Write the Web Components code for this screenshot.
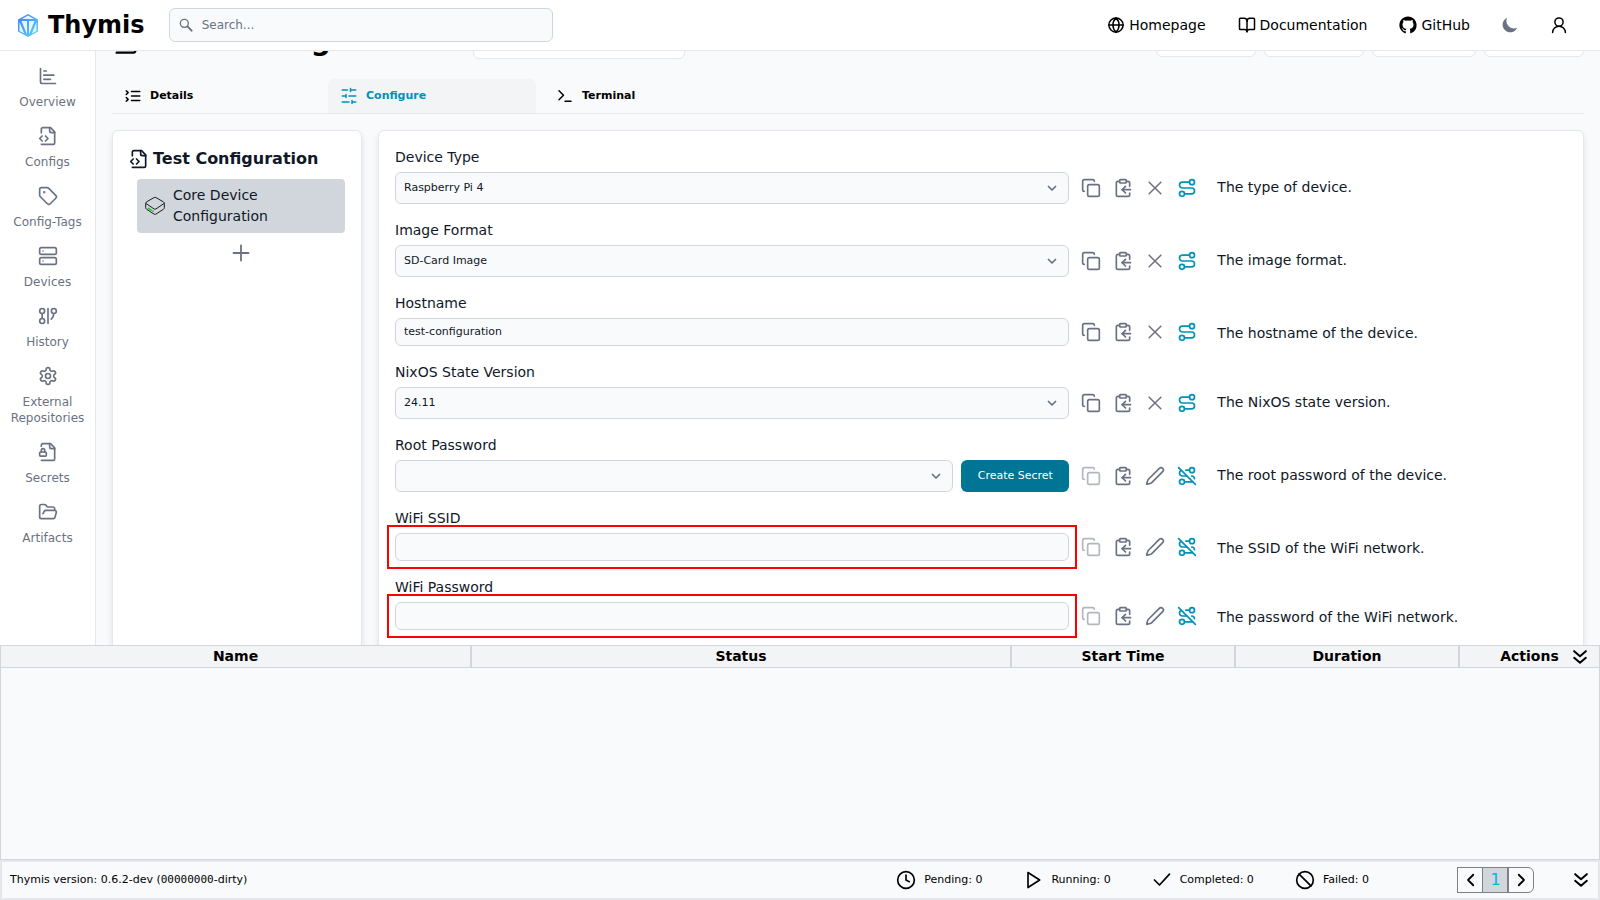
<!DOCTYPE html>
<html lang="en">
<head>
<meta charset="utf-8">
<meta name="viewport" content="width=device-width, initial-scale=1">
<title>Thymis</title>
<style>
  :root {
    --gray-50: #f9fafb;
    --gray-100: #f3f4f6;
    --gray-200: #e5e7eb;
    --gray-300: #d1d5dc;
    --gray-500: #6a7282;
    --gray-900: #101828;
    --primary: #0092b8;
    --primary-dark: #007595;
  }
  body {
    margin: 0;
    font: 14px/21px "DejaVu Sans", sans-serif;
    color: #000;
    background: var(--gray-50);
  }
</style>
</head>
<body>
<thymis-app></thymis-app>

<script>
const ICONS = {
  chart: '<path d="M3 3v16a2 2 0 0 0 2 2h16"/><path d="M7 16h8"/><path d="M7 11h12"/><path d="M7 6h3"/>',
  file: '<path d="M4 22h14a2 2 0 0 0 2-2V7l-5-5H6a2 2 0 0 0-2 2v4"/><path d="M14 2v4a2 2 0 0 0 2 2h4"/><path d="m5 12-3 3 3 3"/><path d="m9 18 3-3-3-3"/>',
  tag: '<path d="M12.586 2.586A2 2 0 0 0 11.172 2H4a2 2 0 0 0-2 2v7.172a2 2 0 0 0 .586 1.414l8.704 8.704a2.426 2.426 0 0 0 3.42 0l6.58-6.58a2.426 2.426 0 0 0 0-3.42z"/><circle cx="7.5" cy="7.5" r=".5" fill="currentColor"/>',
  server: '<rect width="20" height="8" x="2" y="2" rx="2"/><rect width="20" height="8" x="2" y="14" rx="2"/><path d="M6 6h.01M6 18h.01"/>',
  graph: '<circle cx="5" cy="6" r="3"/><path d="M5 9v6"/><circle cx="5" cy="18" r="3"/><path d="M12 3v18"/><circle cx="19" cy="6" r="3"/><path d="M16 15.7A9 9 0 0 0 19 9"/>',
  gear: '<path d="M12.22 2h-.44a2 2 0 0 0-2 2v.18a2 2 0 0 1-1 1.73l-.43.25a2 2 0 0 1-2 0l-.15-.08a2 2 0 0 0-2.73.73l-.22.38a2 2 0 0 0 .73 2.73l.15.1a2 2 0 0 1 1 1.72v.51a2 2 0 0 1-1 1.74l-.15.09a2 2 0 0 0-.73 2.73l.22.38a2 2 0 0 0 2.73.73l.15-.08a2 2 0 0 1 2 0l.43.25a2 2 0 0 1 1 1.73V20a2 2 0 0 0 2 2h.44a2 2 0 0 0 2-2v-.18a2 2 0 0 1 1-1.73l.43-.25a2 2 0 0 1 2 0l.15.08a2 2 0 0 0 2.73-.73l.22-.39a2 2 0 0 0-.73-2.73l-.15-.08a2 2 0 0 1-1-1.74v-.5a2 2 0 0 1 1-1.74l.15-.09a2 2 0 0 0 .73-2.73l-.22-.38a2 2 0 0 0-2.73-.73l-.15.08a2 2 0 0 1-2 0l-.43-.25a2 2 0 0 1-1-1.73V4a2 2 0 0 0-2-2z"/><circle cx="12" cy="12" r="3"/>',
  lock: '<path d="M4 5V4a2 2 0 0 1 2-2h9l5 5v13a2 2 0 0 1-2 2H4"/><path d="M14 2v4a2 2 0 0 0 2 2h4"/><rect width="8" height="5" x="2" y="12" rx="1"/><path d="M8 12v-2a2 2 0 1 0-4 0v2"/>',
  folder: '<path d="m6 14 1.5-2.9A2 2 0 0 1 9.24 10H20a2 2 0 0 1 1.94 2.5l-1.54 6a2 2 0 0 1-1.95 1.5H4a2 2 0 0 1-2-2V5a2 2 0 0 1 2-2h3.9a2 2 0 0 1 1.69.9l.81 1.2a2 2 0 0 0 1.67.9H18a2 2 0 0 1 2 2v2"/>',
  copy: '<rect width="14" height="14" x="8" y="8" rx="2"/><path d="M4 16c-1.1 0-2-.9-2-2V4c0-1.1.9-2 2-2h10c1.1 0 2 .9 2 2"/>',
  paste: '<rect width="8" height="4" x="8" y="2" rx="1"/><path d="M8 4H6a2 2 0 0 0-2 2v14a2 2 0 0 0 2 2h12a2 2 0 0 0 2-2v-2"/><path d="M16 4h2a2 2 0 0 1 2 2v4"/><path d="M21 14H11"/><path d="m15 10-4 4 4 4"/>',
  close: '<path stroke-width="1.8" d="M5 5l14 14M19 5 5 19"/>',
  pen: '<path d="M21.174 6.812a1 1 0 0 0-3.986-3.987L3.842 16.174a2 2 0 0 0-.5.83l-1.321 4.352a.5.5 0 0 0 .623.622l4.353-1.32a2 2 0 0 0 .83-.497z"/>',
  route: '<circle cx="6" cy="19" r="3"/><path d="M9 19h8.5a3.5 3.5 0 0 0 0-7h-11a3.5 3.5 0 0 1 0-7H15"/><circle cx="18" cy="5" r="3"/>',
  routeoff: '<circle cx="6" cy="19" r="3"/><path d="M9 19h8.5c.4 0 .9-.1 1.3-.2"/><path d="M5.2 5.2A3.5 3.53 0 0 0 6.5 12H12"/><path d="m2 2 20 20"/><path d="M21 15.3a3.5 3.5 0 0 0-3.3-3.3"/><path d="M15 5h-4.3"/><circle cx="18" cy="5" r="3"/>',
  list: '<path d="m3 10 2.500-2.500L3 5"/><path d="m3 19 2.500-2.500L3 14"/><path d="M10 6h11"/><path d="M10 12h11"/><path d="M10 18h11"/>',
  sliders: '<path d="M21 4h-7M10 4H3M21 12h-9M8 12H3M21 20h-5M12 20H3M14 2v4M8 10v4M16 18v4"/>',
  terminal: '<path d="m4 17 6-6-6-6"/><path d="M12 19h8"/>',
  plus: '<path stroke-width="2.400" d="M2 12h20M12 2v20"/>',
  down: '<path stroke-width="3.500" d="m5 9 7 7 7-7"/>',
  left: '<path stroke-width="2.400" d="m15 5-7 7 7 7"/>',
  right: '<path stroke-width="2.400" d="m9 5 7 7-7 7"/>',
  ddown: '<path stroke-width="2.400" d="m5 5 7 6 7-6M5 13l7 6 7-6"/>',
  clock: '<circle cx="12" cy="12" r="10"/><path d="M12 6v6l4 2"/>',
  play: '<path d="m6 3 14 9-14 9z"/>',
  check: '<path d="M21 5 9 18l-6-6"/>',
  ban: '<circle cx="12" cy="12" r="10"/><path d="m4.900 4.900 14.200 14.200"/>',
  globe: '<circle cx="12" cy="12" r="9.500"/><path d="M2.500 12h19M12 2.500c-5.500 5.500-5.500 13.500 0 19M12 2.500c5.500 5.500 5.500 13.500 0 19"/>',
  book: '<path d="M12 7v14"/><path d="M3 18a1 1 0 0 1-1-1V4a1 1 0 0 1 1-1h5a4 4 0 0 1 4 4 4 4 0 0 1 4-4h5a1 1 0 0 1 1 1v13a1 1 0 0 1-1 1h-6a3 3 0 0 0-3 3 3 3 0 0 0-3-3z"/>',
  user: '<circle cx="12" cy="8" r="5.500"/><path d="M20.500 22a8.500 8.500 0 0 0-17 0"/>',
  search: '<circle cx="9.500" cy="9.500" r="6"/><path stroke-width="3" d="m14.500 14.500 6 6"/>',
  moon: '<path fill="currentColor" stroke="none" transform="translate(-1.900 -2.800) scale(1.430)" d="M17.293 13.293A8 8 0 0 1 6.707 2.707a8 8 0 1 0 10.586 10.586z"/>',
  github: '<path fill="currentColor" stroke="none" d="M12 .500C5.650.500.500 5.650.500 12c0 5.100 3.300 9.400 7.860 10.900.58.100.79-.250.79-.560v-2c-3.200.700-3.870-1.540-3.870-1.540-.520-1.330-1.280-1.680-1.280-1.680-1.040-.720.080-.700.080-.700 1.160.080 1.770 1.190 1.770 1.190 1.030 1.760 2.700 1.250 3.350.960.100-.750.400-1.250.730-1.540-2.550-.290-5.240-1.280-5.240-5.690 0-1.260.450-2.280 1.190-3.090-.120-.290-.520-1.460.110-3.040 0 0 .970-.310 3.160 1.180a11 11 0 0 1 5.760 0c2.190-1.490 3.150-1.180 3.150-1.180.63 1.580.23 2.750.110 3.040.740.810 1.190 1.830 1.190 3.090 0 4.420-2.690 5.390-5.260 5.680.42.360.78 1.060.78 2.140v3.170c0 .310.200.670.800.560A11.500 11.500 0 0 0 23.500 12C23.500 5.650 18.350.500 12 .500z"/>',
  device: '<path stroke="#1c1c1c" stroke-width="1.200" d="M11 1.800q1-.6 2 0l9 5.200q1.200.8 1.200 2v5q0 1.200-1.200 2l-9 5.800q-1 .6-2 0l-9-5.800q-1.200-.8-1.200-2V9q0-1.200 1.200-2zM1.200 9l9.800 6.600q1 .6 2 0L22.800 9"/><path stroke="#22c03c" stroke-width="2" d="m4 14.800 3.500 2.200M9.500 18.200h.01"/>'
};

/* Registers an element whose open shadow root is built from styles and markup. */
function define(name, css, markup) {
  customElements.define(name, class extends HTMLElement {
    connectedCallback() {
      if (this.shadowRoot) return;
      const root = this.attachShadow({ mode: 'open' });
      const html = typeof markup === 'function' ? markup(this) : markup;
      root.innerHTML = `<style>*{box-sizing:border-box}button,input,select{font:inherit;color:inherit}${css}</style>${html}`;
    }
  });
}

define('ui-icon', `
  :host { display: inline-block; flex: none; width: 20px; height: 20px; }
  svg { display: block; width: 100%; height: 100%; fill: none; stroke: currentColor;
        stroke-width: 2; stroke-linecap: round; stroke-linejoin: round; }
`, el => `<svg viewBox="0 0 24 24" aria-hidden="true">${ICONS[el.getAttribute('name')]}</svg>`);

define('thymis-logo', `
  :host { display: flex; align-items: center; gap: 9px; }
  svg { width: 22px; height: 25px; display: block; }
  b { font-size: 24px; line-height: 32px; }
`, `
  <svg viewBox="0 0 22 25" aria-hidden="true">
    <defs><linearGradient id="g" x1="0" y1="0" x2="1" y2="1">
      <stop offset="0" stop-color="#3f7bf6"/><stop offset="1" stop-color="#5ad8ff"/></linearGradient></defs>
    <path d="M11 1 21 6.500v12L11 24 1 18.500v-12z" fill="url(#g)"/>
    <path d="M11 2.600 17 6H5zM2.500 9l4.700 11.500L2.500 18zM19.500 9l-4.700 11.500 4.700-2.500z" fill="#e6f6ff"/>
    <path d="M4.500 8H10v13.500zM17.500 8H12v13.500z" fill="#e6f6ff"/>
  </svg>
  <b>Thymis</b>
`);

define('top-link', `
  :host { display: block; }
  a { display: flex; align-items: center; gap: 4px; color: inherit; text-decoration: none; }
  ui-icon { width: 18px; height: 18px; }
`, el => `<a href="#${el.getAttribute('icon')}"><ui-icon name="${el.getAttribute('icon')}"></ui-icon><slot></slot></a>`);

define('app-header', `
  :host { display: flex; align-items: center; justify-content: space-between; height: 51px;
          padding: 0 32px 0 17px; background: #fff; border-bottom: 1px solid var(--gray-200);
          box-sizing: border-box; position: relative; z-index: 1; }
  .start { display: flex; align-items: center; gap: 24px; }
  .search { display: flex; align-items: center; gap: 8px; width: 24vw; height: 34px; padding: 0 8px;
            border: 1px solid var(--gray-300); border-radius: 6px; background: var(--gray-50); color: var(--gray-500); }
  .search ui-icon { width: 16px; height: 16px; }
  input { flex: 1; min-width: 0; border: 0; padding: 0; background: none; outline: 0; font-size: 12px; }
  input::placeholder { color: var(--gray-500); opacity: 1; }
  nav { display: flex; align-items: center; gap: 32px; }
  button { border: 0; padding: 0; background: none; display: block; }
  button ui-icon { display: block; width: 18px; height: 18px; }
  .theme { color: var(--gray-500); }
  .theme ui-icon { width: 16px; height: 16px; }
`, `
  <div class="start">
    <thymis-logo></thymis-logo>
    <label class="search"><ui-icon name="search"></ui-icon><input type="search" placeholder="Search..." aria-label="Search"></label>
  </div>
  <nav>
    <top-link icon="globe">Homepage</top-link>
    <top-link icon="book">Documentation</top-link>
    <top-link icon="github">GitHub</top-link>
    <button class="theme" aria-label="Dark mode"><ui-icon name="moon"></ui-icon></button>
    <button aria-label="Account"><ui-icon name="user"></ui-icon></button>
  </nav>
`);

define('side-link', `
  :host { display: block; }
  a { display: flex; flex-direction: column; align-items: center; gap: 8px; padding: 8px 0;
      color: var(--gray-500); text-decoration: none; text-align: center; font-size: 12px; line-height: 16px; }
`, el => `<a href="#${el.getAttribute('icon')}"><ui-icon name="${el.getAttribute('icon')}"></ui-icon><span><slot></slot></span></a>`);

define('app-sidebar', `
  :host { display: block; width: 96px; padding-top: 7px; background: #fff;
          border-right: 1px solid var(--gray-200); box-sizing: border-box; }
`, `
  <nav>
    <side-link icon="chart">Overview</side-link>
    <side-link icon="file">Configs</side-link>
    <side-link icon="tag">Config-Tags</side-link>
    <side-link icon="server">Devices</side-link>
    <side-link icon="graph">History</side-link>
    <side-link icon="gear">External Repositories</side-link>
    <side-link icon="lock">Secrets</side-link>
    <side-link icon="folder">Artifacts</side-link>
  </nav>
`);

/* The heading is scrolled most of the way under the top bar. */
define('page-heading', `
  :host { display: flex; align-items: center; justify-content: space-between; height: 36px; margin-top: -28px; }
  .title, .actions { display: flex; align-items: center; }
  .title { gap: 16px; }
  .title ui-icon { width: 28px; height: 28px; }
  h1 { margin: 0; font-size: 28px; line-height: 36px; white-space: nowrap; }
  .actions { gap: 8px; }
  select, button { border: 1px solid var(--gray-200); border-radius: 6px; background: #fff; }
  select { appearance: none; width: 212px; height: 36px; margin-left: 12px; }
  button { width: 100px; height: 32px; }
  .wide { width: 104px; }
`, `
  <div class="title">
    <ui-icon name="file"></ui-icon>
    <h1>Test Configuration</h1>
    <select aria-label="Tags"><option></option></select>
  </div>
  <div class="actions">
    <button aria-label="Commit"></button><button aria-label="Build"></button>
    <button class="wide" aria-label="Deploy"></button><button aria-label="Download"></button>
  </div>
`);

define('tab-link', `
  :host { display: block; width: 208px; }
  a { display: flex; align-items: center; gap: 8px; height: 34px; padding: 0 12px; color: #000;
      font-size: 11px; line-height: 16px; font-weight: bold; text-decoration: none; border-radius: 6px 6px 0 0; }
  ui-icon { width: 18px; height: 18px; }
  :host([active]) a { background: var(--gray-100); color: var(--primary); }
`, el => `<a href="#${el.getAttribute('icon')}"><ui-icon name="${el.getAttribute('icon')}"></ui-icon><span><slot></slot></span></a>`);

define('tab-bar', `
  :host { display: flex; gap: 8px; border-bottom: 1px solid var(--gray-200); }
`, `<slot></slot>`);

define('ui-card', `
  :host { display: block; box-sizing: border-box; padding: 16px; background: #fff; min-width: 0;
          border: 1px solid var(--gray-200); border-radius: 6px; box-shadow: 0 4px 6px rgb(0 0 0 / .1); }
`, `<slot></slot>`);

define('module-list', `
  :host { display: block; color: var(--gray-900); }
  h2 { display: flex; align-items: center; gap: 4px; margin: 0 0 8px; font-size: 16px; line-height: 24px; white-space: nowrap; }
  .body { margin-left: 8px; }
  .module { display: flex; align-items: center; gap: 8px; width: 100%; padding: 6px 8px; border: 0;
            border-radius: 4px; background: var(--gray-300); text-align: left; line-height: 21px; }
  .add { display: block; margin: 11px auto 0; padding: 0; border: 0; background: none; color: var(--gray-500); }
  .add ui-icon { display: block; width: 18px; height: 18px; }
`, `
  <h2><ui-icon name="file"></ui-icon>Test Configuration</h2>
  <div class="body">
    <button class="module"><ui-icon name="device"></ui-icon><span>Core Device Configuration</span></button>
    <button class="add" aria-label="Add module"><ui-icon name="plus"></ui-icon></button>
  </div>
`);

define('config-field', `
  :host { display: block; color: var(--gray-900); }
  label { display: block; margin-bottom: 4px; }
  .row { display: grid; grid-template-columns: minmax(0, 27fr) auto minmax(0, 14fr); }
  .control { display: flex; gap: 8px; }
  .box { flex: 1; min-width: 0; display: grid; align-items: center; }
  .box > * { grid-area: 1 / 1; }
  input, select { width: 100%; padding: 0 8px 2px; border: 1px solid var(--gray-300); border-radius: 6px;
                  background: var(--gray-50); font-size: 11px; outline: 0; }
  input { height: 28px; }
  select { appearance: none; height: 32px; }
  .box ui-icon { width: 12px; height: 12px; justify-self: end; margin-right: 11px; color: var(--gray-500); pointer-events: none; }
  .create { width: 108px; height: 32px; padding: 0 0 2px; border: 0; border-radius: 6px; background: var(--primary-dark);
            color: #fff; font-size: 11px; }
  .tools { display: flex; align-items: center; gap: 12px; margin: 0 20px 0 12px; color: var(--gray-500); }
  .tools button { display: block; padding: 0; border: 0; background: none; }
  .tools ui-icon { display: block; }
  .tools button:disabled { opacity: .5; }
  .tools .inherit { color: var(--primary); }
  p { margin: 5px 0 0; white-space: nowrap; }
  :host([highlight]) .box { outline: 2px solid #f00; outline-offset: 6px; }
`, el => {
  const a = n => el.getAttribute(n) || '';
  const set = el.hasAttribute('value');
  const control = a('kind') === 'select'
    ? `<select id="c"><option>${a('value')}</option></select><ui-icon name="down"></ui-icon>`
    : `<input id="c" type="text" value="${a('value')}">`;
  return `
  <label for="c">${a('label')}</label>
  <div class="row">
    <div class="control"><div class="box">${control}</div>${el.hasAttribute('secret') ? '<button class="create">Create Secret</button>' : ''}</div>
    <div class="tools">
      <button aria-label="Copy" ${set ? '' : 'disabled'}><ui-icon name="copy"></ui-icon></button>
      <button aria-label="Paste"><ui-icon name="paste"></ui-icon></button>
      <button aria-label="${set ? 'Clear' : 'Edit'}"><ui-icon name="${set ? 'close' : 'pen'}"></ui-icon></button>
      <button class="inherit" aria-label="Route"><ui-icon name="${set ? 'route' : 'routeoff'}"></ui-icon></button>
    </div>
    <p><slot></slot></p>
  </div>`;
});

define('config-form', `
  :host { display: flex; flex-direction: column; gap: 16px; }
`, `
  <config-field label="Device Type" kind="select" value="Raspberry Pi 4">The type of device.</config-field>
  <config-field label="Image Format" kind="select" value="SD-Card Image">The image format.</config-field>
  <config-field label="Hostname" kind="text" value="test-configuration">The hostname of the device.</config-field>
  <config-field label="NixOS State Version" kind="select" value="24.11">The NixOS state version.</config-field>
  <config-field label="Root Password" kind="select" secret>The root password of the device.</config-field>
  <config-field label="WiFi SSID" kind="text" highlight>The SSID of the WiFi network.</config-field>
  <config-field label="WiFi Password" kind="text" highlight>The password of the WiFi network.</config-field>
`);

define('task-table', `
  :host { display: block; position: relative; height: 215px; box-sizing: border-box;
          border: 1px solid var(--gray-300); background: var(--gray-50); }
  table { width: 100%; table-layout: fixed; border-collapse: collapse; }
  th { padding: 0; height: 21px; line-height: 21px; background: var(--gray-100); border-bottom: 1px solid var(--gray-300); }
  th + th { border-left: 2px solid var(--gray-300); }
  .name { width: 470px; } .status { width: auto; } .time { width: 224px; } .act { width: 140px; }
  button { position: absolute; top: 1px; right: 9px; padding: 0; border: 0; background: none; }
  ui-icon { display: block; }
`, `
  <table>
    <colgroup><col class="name"><col class="status"><col class="time"><col class="time"><col class="act"></colgroup>
    <thead><tr><th>Name</th><th>Status</th><th>Start Time</th><th>Duration</th><th>Actions</th></tr></thead>
    <tbody></tbody>
  </table>
  <button aria-label="Collapse tasks"><ui-icon name="ddown"></ui-icon></button>
`);

define('status-count', `
  :host { display: flex; align-items: center; gap: 8px; }
`, el => `<ui-icon name="${el.getAttribute('icon')}"></ui-icon><span><slot></slot></span>`);

define('page-switch', `
  :host { display: flex; }
  button { display: grid; place-items: center; width: 27px; height: 26px; padding: 0; font-size: 16px;
           border: 1px solid #808080; background: none; }
  button + button { margin-left: -2px; }
  button:first-child { border-radius: 6px 0 0 6px; }
  button:last-child { border-radius: 0 6px 6px 0; }
  .current { background: var(--gray-300); color: #00b8db; }
  ui-icon { width: 18px; height: 18px; }
`, `
  <button aria-label="Previous page"><ui-icon name="left"></ui-icon></button>
  <button class="current">1</button>
  <button aria-label="Next page"><ui-icon name="right"></ui-icon></button>
`);

define('status-bar', `
  :host { display: flex; align-items: center; height: 40px; padding: 0 7px 0 8px; box-sizing: border-box;
          border: 2px solid var(--gray-200); font-size: 11px; line-height: 16px; background: var(--gray-50); }
  .version { margin-right: auto; }
  code { font-family: "DejaVu Sans Mono", monospace; font-size: 11px; }
  .counts { display: flex; gap: 41px; margin-right: 88px; }
  .toggle { display: block; margin-left: 37px; padding: 0; border: 0; background: none; }
  .toggle ui-icon { display: block; }
`, `
  <span class="version">Thymis version: 0.6.2-dev (<code>00000000</code>-dirty)</span>
  <div class="counts">
    <status-count icon="clock">Pending: 0</status-count>
    <status-count icon="play">Running: 0</status-count>
    <status-count icon="check">Completed: 0</status-count>
    <status-count icon="ban">Failed: 0</status-count>
  </div>
  <page-switch></page-switch>
  <button class="toggle" aria-label="Collapse panel"><ui-icon name="ddown"></ui-icon></button>
`);

define('thymis-app', `
  :host { display: grid; grid-template-rows: auto minmax(0, 1fr) auto auto; height: 100vh; }
  .middle { display: grid; grid-template-columns: auto minmax(0, 1fr); min-height: 0; }
  app-sidebar { overflow: hidden; }
  main { padding: 0 16px; overflow: hidden; }
  tab-bar { margin: 20px 0 16px; }
  .cards { display: grid; grid-template-columns: 250px minmax(0, 1fr); gap: 16px; min-height: 600px; }
`, `
  <app-header></app-header>
  <div class="middle">
    <app-sidebar></app-sidebar>
    <main>
      <page-heading></page-heading>
      <tab-bar>
        <tab-link icon="list">Details</tab-link>
        <tab-link icon="sliders" active>Configure</tab-link>
        <tab-link icon="terminal">Terminal</tab-link>
      </tab-bar>
      <div class="cards">
        <ui-card><module-list></module-list></ui-card>
        <ui-card><config-form></config-form></ui-card>
      </div>
    </main>
  </div>
  <task-table></task-table>
  <status-bar></status-bar>
`);
</script>
</body>
</html>
